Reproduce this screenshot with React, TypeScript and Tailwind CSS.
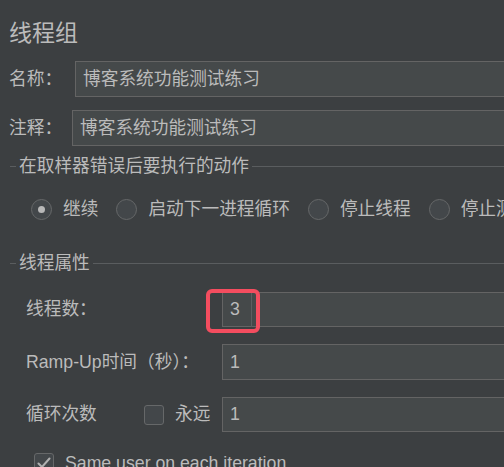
const FONT = { fontFamily: '"Liberation Sans", "Noto Sans CJK SC", sans-serif' };

function Field({ value, className = "" }: { value: string; className?: string }) {
  return (
    <div
      className={`flex h-[35px] w-[520px] shrink-0 items-center border border-[#646464] bg-[#45494a] pl-[7px] text-[#bbbbbb] ${className}`}
    >
      {value}
    </div>
  );
}

function Legend({ title }: { title: string }) {
  return (
    <div className="flex h-[20px] items-center">
      <div className="ml-[10px] h-px w-[6px] bg-[#5a5d5f]" />
      <span className="px-[3px] leading-[20px]">{title}</span>
      <div className="h-px flex-1 bg-[#5a5d5f]" />
    </div>
  );
}

function Radio({ label, checked = false }: { label: string; checked?: boolean }) {
  return (
    <div className="flex shrink-0 items-center">
      <div className="flex h-[21px] w-[21px] items-center justify-center rounded-full border border-[#666869] bg-[#43474a]">
        {checked && <div className="h-[7px] w-[7px] rounded-full bg-[#b8b8b8]" />}
      </div>
      <span className="ml-[11px] mr-[18px] whitespace-nowrap">{label}</span>
    </div>
  );
}

function Checkbox({ checked = false }: { checked?: boolean }) {
  return (
    <div className="flex h-[20px] w-[20px] shrink-0 items-center justify-center rounded-[3px] border border-[#666869] bg-[#43474a]">
      {checked && (
        <svg width="14" height="12" viewBox="0 0 14 12" fill="none">
          <path d="M1.5 6.5 L5 10 L12.5 1.5" stroke="#b0b0b0" strokeWidth="2" strokeLinecap="round" strokeLinejoin="round" />
        </svg>
      )}
    </div>
  );
}

export default function App() {
  return (
    <div
      className="relative h-[467px] w-[504px] overflow-hidden bg-[#3c3f41] text-[17.7px] text-[#bbbbbb]"
      style={FONT}
    >
      <div className="pl-[9px] pt-[18px] text-[23px] leading-[30px]">线程组</div>

      <div className="mt-[13px] flex h-[36px] items-center">
        <span className="w-[75px] shrink-0 pl-[9px]">名称：</span>
        <Field value="博客系统功能测试练习" className="h-[36px]" />
      </div>
      <div className="mt-[13px] flex h-[36px] items-center">
        <span className="w-[72px] shrink-0 pl-[9px]">注释：</span>
        <Field value="博客系统功能测试练习" className="h-[36px]" />
      </div>

      <div className="mt-[10px]">
        <Legend title="在取样器错误后要执行的动作" />
      </div>
      <div className="mt-[22px] flex h-[22px] items-center pl-[31px]">
        <Radio label="继续" checked />
        <Radio label="启动下一进程循环" />
        <Radio label="停止线程" />
        <Radio label="停止测试" />
      </div>

      <div className="mt-[33px]">
        <Legend title="线程属性" />
      </div>

      <div className="pl-[26px]">
        <div className="relative mt-[19px] flex h-[35px] items-center">
          <span className="w-[196px] shrink-0">线程数：</span>
          <Field value="3" />
          <div className="absolute left-[225px] top-0 h-[35px] w-px bg-[#5c5f61]" />
          <div className="absolute left-[180px] top-[-3px] h-[44px] w-[54px] rounded-[6px] border-[4px] border-[#f44d5f]" />
        </div>

        <div className="mt-[17px] flex h-[36px] items-center">
          <span className="w-[196px] shrink-0 whitespace-nowrap">Ramp-Up时间（秒）：</span>
          <Field value="1" className="h-[36px]" />
        </div>

        <div className="mt-[17px] flex h-[35px] items-center">
          <span className="w-[118px] shrink-0">循环次数</span>
          <Checkbox />
          <span className="ml-[11px] w-[47px] shrink-0">永远</span>
          <Field value="1" />
        </div>
      </div>

      <div className="mt-[21px] flex h-[20px] items-center pl-[34px]">
        <Checkbox checked />
        <span className="ml-[11px] whitespace-nowrap">Same user on each iteration</span>
      </div>
    </div>
  );
}
